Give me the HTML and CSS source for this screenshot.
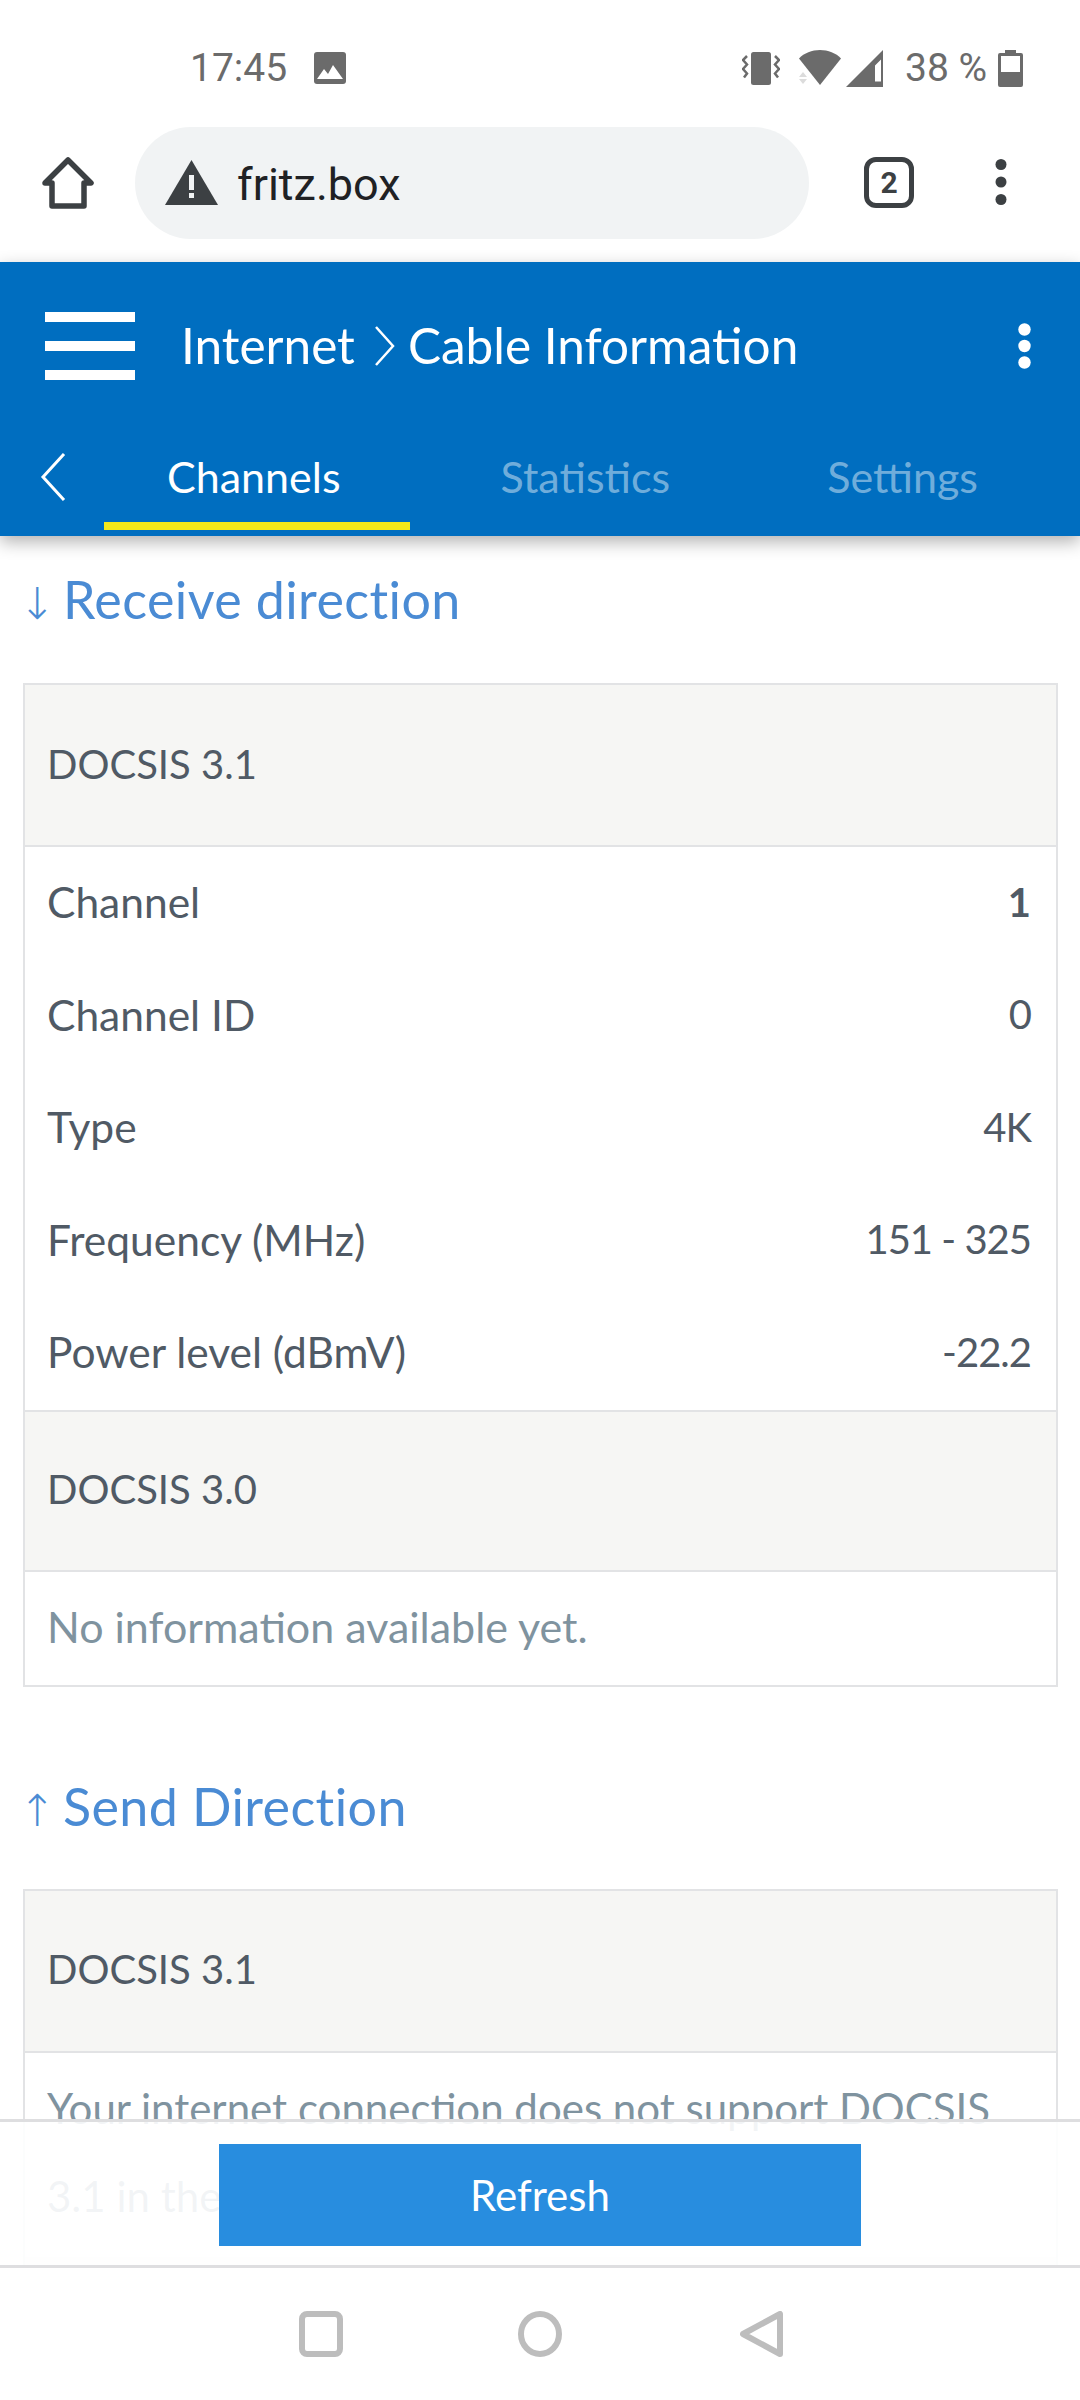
FILE: index.html
```html
<!DOCTYPE html>
<html lang="en">
<head>
<meta charset="utf-8">
<title>Cable Information</title>
<link rel="stylesheet" href="styles.css">
</head>
<body>
<div class="screen">
  <div class="statusbar">
    <div class="status-left">
      <span class="time">17:45</span>
      <svg class="ic-image" viewBox="0 0 32 32"><rect width="32" height="32" rx="3" fill="#6b6b6b"/><path d="M3 27l7-10 4 5 5-9 10 14z" fill="#fff"/></svg>
    </div>
    <div class="status-right">
      <svg class="ic-vibrate" viewBox="0 0 38 35"><rect x="9" y="1" width="20" height="33" rx="2.5" fill="#6b6b6b"/><path d="M5 5L1 9l4 4.500-4 4.500 4 4.500-3 4M33 5l4 4-4 4.500 4 4.500-4 4.500 3 4" fill="none" stroke="#6b6b6b" stroke-width="2.500"/></svg>
      <svg class="ic-wifi" viewBox="0 0 42 36"><path d="M0 8.500C5 3 13 0 21 0s16 3 21 8.500L21 35z" fill="#6b6b6b"/><path d="M4 21l-4 5h8zM0 28l4 5 4-5z" transform="translate(0 1)" fill="#dcdcdc" opacity="1"/></svg>
      <svg class="ic-signal" viewBox="0 0 37 37"><path d="M37 0v37H0zM29 15.500v16h6v-22z" fill="#6b6b6b" fill-rule="evenodd"/></svg>
      <span class="battery-text">38 %</span>
      <svg class="ic-battery" viewBox="0 0 25 37"><path d="M7 0h11v3h5a2 2 0 0 1 2 2v30a2 2 0 0 1-2 2H2a2 2 0 0 1-2-2V5a2 2 0 0 1 2-2h5z" fill="#6b6b6b"/><rect x="3" y="6" width="19" height="16" fill="#fff"/></svg>
    </div>
  </div>

  <div class="toolbar">
    <svg class="ic-home" viewBox="0 0 52 52"><path d="M3 26L26 3l23 23h-7v23H10V26z" fill="none" stroke="#3c4043" stroke-width="5.500" stroke-linejoin="round"/></svg>
    <div class="urlbar">
      <svg class="ic-warn" viewBox="0 0 53 45"><path d="M26.500 0L53 45H0z" fill="#3c4043"/><rect x="24" y="15" width="5" height="15" fill="#f1f3f4"/><rect x="24" y="33" width="5" height="5" fill="#f1f3f4"/></svg>
      <span class="url">fritz.box</span>
    </div>
    <div class="tabcount">2</div>
    <svg class="ic-dots" viewBox="0 0 12 46"><circle cx="6" cy="5.500" r="5.500"/><circle cx="6" cy="23" r="5.500"/><circle cx="6" cy="40.500" r="5.500"/></svg>
  </div>

  <header class="appbar">
    <div class="appbar-top">
      <div class="burger"><span></span><span></span><span></span></div>
      <div class="crumbs">
        <span>Internet</span>
        <svg class="ic-crumb" viewBox="0 0 22 40"><path d="M2 1l17 19L2 39" fill="none" stroke="#fff" stroke-width="2.500"/></svg>
        <span>Cable Information</span>
      </div>
      <svg class="ic-more" viewBox="0 0 13 46"><circle cx="6.500" cy="6.500" r="6.200"/><circle cx="6.500" cy="23" r="6.200"/><circle cx="6.500" cy="39.500" r="6.200"/></svg>
    </div>
    <nav class="tabs">
      <svg class="ic-back" viewBox="0 0 26 48"><path d="M24 1L3 24l21 23" fill="none" stroke="#fff" stroke-width="3"/></svg>
      <a class="tab active">Channels</a>
      <a class="tab">Statistics</a>
      <a class="tab">Settings</a>
    </nav>
  </header>

  <main class="content">
    <h2 class="section-title"><span class="arrow">↓</span>Receive direction</h2>
    <section class="card">
      <h3 class="card-head">DOCSIS 3.1</h3>
      <div class="rows">
        <div class="row"><span>Channel</span><strong>1</strong></div>
        <div class="row"><span>Channel ID</span><span class="num">0</span></div>
        <div class="row"><span>Type</span><span class="num">4K</span></div>
        <div class="row"><span>Frequency (MHz)</span><span class="num">151 - 325</span></div>
        <div class="row"><span>Power level (dBmV)</span><span class="num">-22.2</span></div>
      </div>
      <h3 class="card-head">DOCSIS 3.0</h3>
      <p class="note">No information available yet.</p>
    </section>

    <h2 class="section-title send"><span class="arrow">↑</span>Send Direction</h2>
    <section class="card">
      <h3 class="card-head">DOCSIS 3.1</h3>
      <p class="note long">Your internet connection does not support DOCSIS<br>3.1 in the</p>
      <div class="card-head"></div>
    </section>

    <div class="footer"><button class="refresh">Refresh</button></div>
  </main>

  <div class="navbar">
    <svg class="ic-nav" viewBox="0 0 44 46"><rect x="3" y="3" width="38" height="40" rx="5" fill="none" stroke="#bdbdbd" stroke-width="6"/></svg>
    <svg class="ic-nav" viewBox="0 0 44 46"><ellipse cx="22" cy="23" rx="19" ry="20" fill="none" stroke="#bdbdbd" stroke-width="6"/></svg>
    <svg class="ic-nav nudge" viewBox="0 0 44 46"><path d="M40 3v40L3 23z" fill="none" stroke="#bdbdbd" stroke-width="6" stroke-linejoin="round"/></svg>
  </div>
</div>
</body>
</html>
```

FILE: styles.css
```css
* { box-sizing: border-box; }
html, body { margin: 0; padding: 0; background: #fff; }
.screen {
  width: 1080px; height: 2400px; overflow: hidden;
  display: flex; flex-direction: column;
  font-family: "Lato", "Noto Sans", sans-serif;
  color: #505a65;
}

/* status bar */
.statusbar {
  height: 84px; flex: none;
  display: flex; justify-content: space-between; align-items: flex-end;
  padding: 0 57px 0 190px;
  font-family: "Roboto", sans-serif; color: #6b6b6b; font-size: 39px;
}
.status-left, .status-right { display: flex; align-items: center; height: 40px; position: relative; top: 4px; }
.time { width: 98px; white-space: nowrap; }
.ic-image { width: 32px; height: 32px; margin-left: 26px; }
.ic-vibrate { width: 38px; height: 35px; }
.ic-wifi { width: 42px; height: 36px; margin-left: 19px; }
.ic-signal { width: 37px; height: 37px; margin-left: 5px; }
.battery-text { margin-left: 22px; width: 80px; white-space: nowrap; }
.ic-battery { width: 25px; height: 37px; margin-left: 13px; }

/* browser toolbar */
.toolbar {
  height: 178px; flex: none;
  display: flex; align-items: flex-start;
  padding-top: 43px;
}
.ic-home { width: 52px; height: 52px; margin: 30px 0 0 42px; }
.urlbar {
  width: 674px; height: 112px; margin-left: 41px; border-radius: 56px;
  background: #f1f3f4;
  display: flex; align-items: center; padding-left: 30px;
}
.ic-warn { width: 53px; height: 45px; margin-bottom: 2px; }
.url { font-family: "Roboto", sans-serif; font-size: 45px; color: #202124; margin-left: 19px; padding-top: 2px; }
.tabcount {
  width: 50px; height: 51px; margin: 30px 0 0 55px;
  border: 5px solid #3c4043; border-radius: 12px;
  display: flex; align-items: center; justify-content: center;
  font-family: "Roboto", sans-serif; font-weight: 700; font-size: 30px; color: #3c4043;
}
.ic-dots { width: 12px; height: 46px; margin: 32px 0 0 81px; fill: #3c4043; }

/* app bar */
.appbar {
  height: 274px; flex: none; background: #006ec0; color: #fff;
  position: relative; z-index: 2;
  box-shadow: 0 6px 16px rgba(0, 0, 0, .3);
}
.appbar-top { height: 167px; display: flex; align-items: center; padding: 0 0 0 45px; position: relative; }
.burger { width: 90px; height: 68px; display: flex; flex-direction: column; justify-content: space-between; }
.burger span { height: 10px; background: #fff; }
.crumbs { display: flex; align-items: center; margin-left: 46px; font-size: 49.500px; line-height: 1; width: 837px; flex: none; white-space: nowrap; }
.ic-crumb { width: 22px; height: 40px; margin: 0 12px 0 19px; }
.ic-more { width: 13px; height: 46px; fill: #fff; flex: none; }
.tabs { height: 107px; display: flex; align-items: flex-start; position: relative; padding-left: 40px; }
.ic-back { width: 26px; height: 48px; margin-top: 24px; }
.tab {
  height: 101px; padding: 0 66px; margin-left: 25px; line-height: 95px;
  font-size: 43px; color: rgba(255, 255, 255, .45);
  white-space: nowrap;
}
.tab:first-of-type { margin-left: 38px; padding: 0 69px 0 63px; }
.tab.active { color: #fff; border-bottom: 8px solid #f4e81a; }

/* content */
.content { flex: 1; min-height: 0; position: relative; overflow: hidden; padding: 0 22px 0 23px; }
.section-title { margin: 0; height: 147px; padding-top: 28px; line-height: 70px; font-weight: 400; font-size: 52px; letter-spacing: .4px; color: #4a8bd4; white-space: nowrap; }
.section-title.send { height: 202px; padding-top: 84px; }
.arrow { display: inline-block; width: 44px; margin-left: -4px; font-family: "DejaVu Sans", sans-serif; font-size: 44px; font-weight: 200; }
.card { border: 2px solid #e2e3e5; background: #fff; }
.card-head {
  margin: 0; height: 162px; padding: 0 22px 3px; display: flex; align-items: center;
  background: #f6f6f4; font-weight: 400; font-size: 40px; color: #505a65;
  border-bottom: 2px solid #e2e3e5;
}
.rows { padding: 0 25px 0 22px; }
.row { height: 112.500px; display: flex; justify-content: space-between; align-items: center; font-size: 42.500px; padding-bottom: 3px; }
.row .num { font-size: 40px; letter-spacing: -1px; }
.row strong { font-weight: 700; font-size: 40px; }
.rows + .card-head { border-top: 2px solid #e2e3e5; }
.note { margin: 0; padding: 11px 22px 14px; font-size: 43px; line-height: 88px; color: #7f939f; white-space: nowrap; }
.note.long { height: 204px; font-size: 42px; }

/* sticky footer over the content */
.footer {
  position: absolute; left: 0; right: 0; bottom: 0; height: 149px;
  background: rgba(255, 255, 255, .9);
  border-top: 3px solid #dedee0; border-bottom: 3px solid #dedee0;
  display: flex; justify-content: center; padding-top: 22px;
}
.refresh {
  width: 642px; height: 102px; border: 0; background: #288ddf; color: #fff;
  font-family: inherit; font-size: 42px; padding: 0;
}

/* android nav */
.navbar { height: 132px; flex: none; background: #fff; display: flex; justify-content: center; gap: 175px; padding-top: 43px; }
.ic-nav { width: 44px; height: 46px; }
.nudge { transform: translateX(3px); }
```
